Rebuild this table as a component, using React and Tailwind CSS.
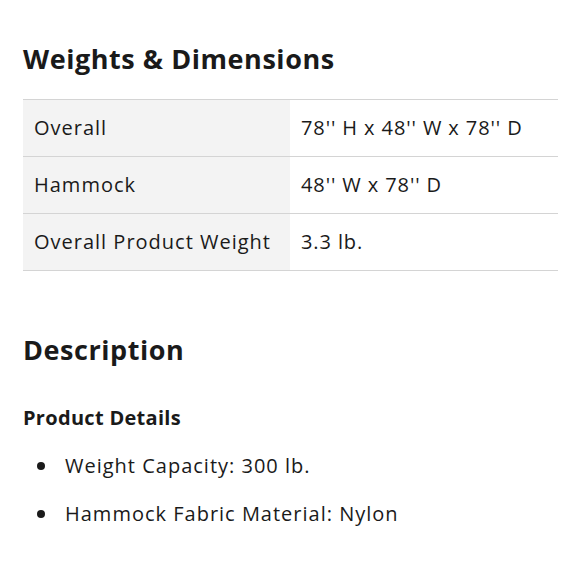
const rows = [
  { label: "Overall", value: "78'' H x 48'' W x 78'' D" },
  { label: "Hammock", value: "48'' W x 78'' D" },
  { label: "Overall Product Weight", value: "3.3 lb." },
];

const details = ["Weight Capacity: 300 lb.", "Hammock Fabric Material: Nylon"];

export default function App() {
  return (
    <div
      className="bg-white w-[580px] h-[580px] px-[23px] pt-[40px] text-[#1a1a1a]"
      style={{ fontFamily: "'Open Sans', Lato, sans-serif" }}
    >
      <h2 className="text-[27px] font-bold leading-[38px] tracking-[0.55px]">
        Weights &amp; Dimensions
      </h2>

      <div className="mt-[21px] w-[535px] border-t border-[#d4d4d4]">
        {rows.map((row) => (
          <div key={row.label} className="flex h-[57px] border-b border-[#d4d4d4]">
            <div className="w-[267px] bg-[#f3f3f3] flex items-center pl-[11px] text-[20px] tracking-[1px]">
              {row.label}
            </div>
            <div className="flex-1 flex items-center pl-[11px] text-[20px] tracking-[0.9px]">
              {row.value}
            </div>
          </div>
        ))}
      </div>

      <h2 className="mt-[60px] text-[27px] font-bold leading-[38px] tracking-[0.55px]">Description</h2>

      <h3 className="mt-[35px] text-[20px] font-bold leading-[28px] tracking-[0.3px]">Product Details</h3>

      <ul className="mt-[20px] flex flex-col gap-[20px]">
        {details.map((d) => (
          <li key={d} className="flex items-center text-[20px] leading-[28px] tracking-[1px]">
            <span className="w-[8px] h-[8px] rounded-full bg-[#1a1a1a] ml-[14px] mr-[20px]" />
            {d}
          </li>
        ))}
      </ul>
    </div>
  );
}
